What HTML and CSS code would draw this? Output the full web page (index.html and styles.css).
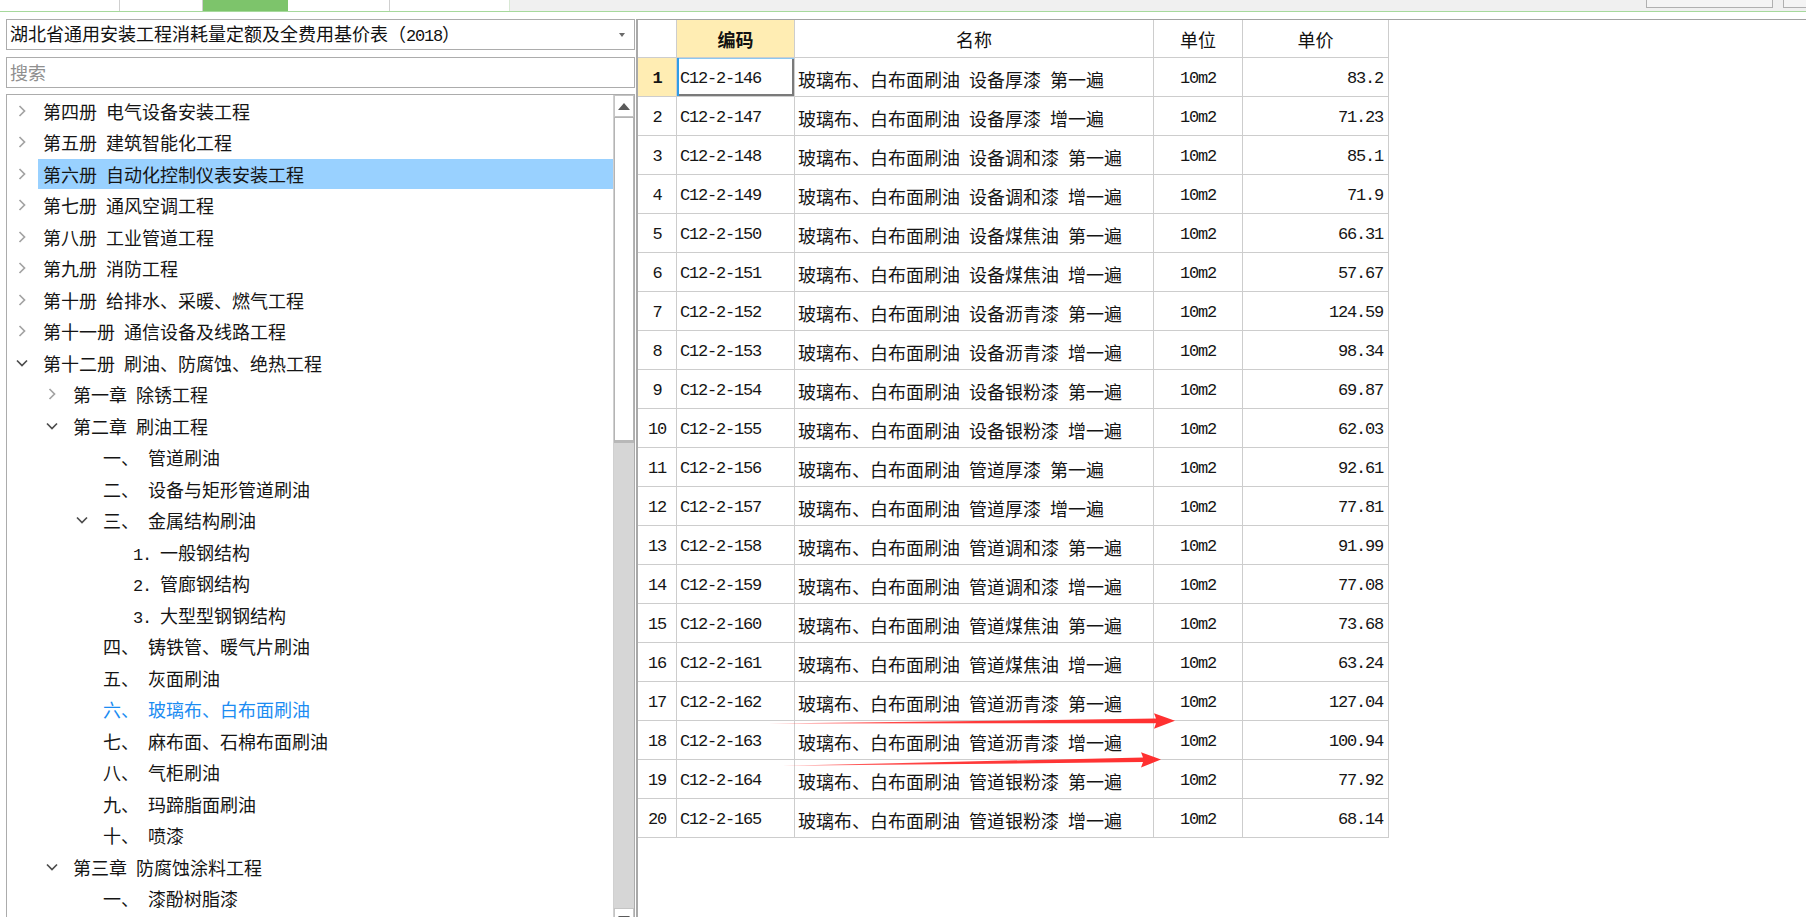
FILE: index.html
```html
<!DOCTYPE html>
<html lang="zh-CN">
<head>
<meta charset="utf-8">
<title>定额库</title>
<link rel="stylesheet" href="styles.css">
</head>
<body>
<div class="topbar">
  <div class="tab t1"></div>
  <div class="tab t2"></div>
  <div class="tab t3 active"></div>
  <div class="tab t4"></div>
  <div class="tab t5"></div>
  <div class="top-right">
    <div class="tbtn tbtn-a"></div>
    <div class="tbtn tbtn-b"></div>
  </div>
</div>

<div class="main">
  <div class="left">
    <div class="combo">
      <span class="combo-text">湖北省通用安装工程消耗量定额及全费用基价表（<span class="hw">2018</span>）</span>
      <span class="combo-arrow"></span>
    </div>
    <div class="search"><span class="placeholder">搜索</span></div>
    <div class="tree">
      <div class="tree-list">
        <div class="node l1"><span class="chev"><svg width="8" height="12" viewBox="0 0 8 12"><polyline points="1.5,1 6.5,6 1.5,11" class="ch-c"/></svg></span><span class="label">第四册 电气设备安装工程</span></div>
        <div class="node l1"><span class="chev"><svg width="8" height="12" viewBox="0 0 8 12"><polyline points="1.5,1 6.5,6 1.5,11" class="ch-c"/></svg></span><span class="label">第五册 建筑智能化工程</span></div>
        <div class="node l1"><span class="chev"><svg width="8" height="12" viewBox="0 0 8 12"><polyline points="1.5,1 6.5,6 1.5,11" class="ch-c"/></svg></span><span class="label selected">第六册 自动化控制仪表安装工程</span></div>
        <div class="node l1"><span class="chev"><svg width="8" height="12" viewBox="0 0 8 12"><polyline points="1.5,1 6.5,6 1.5,11" class="ch-c"/></svg></span><span class="label">第七册 通风空调工程</span></div>
        <div class="node l1"><span class="chev"><svg width="8" height="12" viewBox="0 0 8 12"><polyline points="1.5,1 6.5,6 1.5,11" class="ch-c"/></svg></span><span class="label">第八册 工业管道工程</span></div>
        <div class="node l1"><span class="chev"><svg width="8" height="12" viewBox="0 0 8 12"><polyline points="1.5,1 6.5,6 1.5,11" class="ch-c"/></svg></span><span class="label">第九册 消防工程</span></div>
        <div class="node l1"><span class="chev"><svg width="8" height="12" viewBox="0 0 8 12"><polyline points="1.5,1 6.5,6 1.5,11" class="ch-c"/></svg></span><span class="label">第十册 给排水、采暖、燃气工程</span></div>
        <div class="node l1"><span class="chev"><svg width="8" height="12" viewBox="0 0 8 12"><polyline points="1.5,1 6.5,6 1.5,11" class="ch-c"/></svg></span><span class="label">第十一册 通信设备及线路工程</span></div>
        <div class="node l1"><span class="chev"><svg width="12" height="8" viewBox="0 0 12 8"><polyline points="1,1.5 6,6.5 11,1.5" class="ch-e"/></svg></span><span class="label">第十二册 刷油、防腐蚀、绝热工程</span></div>
        <div class="node l2"><span class="chev"><svg width="8" height="12" viewBox="0 0 8 12"><polyline points="1.5,1 6.5,6 1.5,11" class="ch-c"/></svg></span><span class="label">第一章 除锈工程</span></div>
        <div class="node l2"><span class="chev"><svg width="12" height="8" viewBox="0 0 12 8"><polyline points="1,1.5 6,6.5 11,1.5" class="ch-e"/></svg></span><span class="label">第二章 刷油工程</span></div>
        <div class="node l3"><span class="chev"></span><span class="label">一、 管道刷油</span></div>
        <div class="node l3"><span class="chev"></span><span class="label">二、 设备与矩形管道刷油</span></div>
        <div class="node l3"><span class="chev"><svg width="12" height="8" viewBox="0 0 12 8"><polyline points="1,1.5 6,6.5 11,1.5" class="ch-e"/></svg></span><span class="label">三、 金属结构刷油</span></div>
        <div class="node l4"><span class="chev"></span><span class="label"><span class="hw">1.</span> 一般钢结构</span></div>
        <div class="node l4"><span class="chev"></span><span class="label"><span class="hw">2.</span> 管廊钢结构</span></div>
        <div class="node l4"><span class="chev"></span><span class="label"><span class="hw">3.</span> 大型型钢钢结构</span></div>
        <div class="node l3"><span class="chev"></span><span class="label">四、 铸铁管、暖气片刷油</span></div>
        <div class="node l3"><span class="chev"></span><span class="label">五、 灰面刷油</span></div>
        <div class="node l3"><span class="chev"></span><span class="label current">六、 玻璃布、白布面刷油</span></div>
        <div class="node l3"><span class="chev"></span><span class="label">七、 麻布面、石棉布面刷油</span></div>
        <div class="node l3"><span class="chev"></span><span class="label">八、 气柜刷油</span></div>
        <div class="node l3"><span class="chev"></span><span class="label">九、 玛蹄脂面刷油</span></div>
        <div class="node l3"><span class="chev"></span><span class="label">十、 喷漆</span></div>
        <div class="node l2"><span class="chev"><svg width="12" height="8" viewBox="0 0 12 8"><polyline points="1,1.5 6,6.5 11,1.5" class="ch-e"/></svg></span><span class="label">第三章 防腐蚀涂料工程</span></div>
        <div class="node l3"><span class="chev"></span><span class="label">一、 漆酚树脂漆</span></div>
      </div>
      <div class="vscroll">
        <div class="sbtn"><svg width="12" height="7" viewBox="0 0 12 7"><polygon points="0,7 6,0 12,7" fill="#5a5a5a"/></svg></div>
        <div class="thumb"></div>
        <div class="track"></div>
        <div class="sbtn"><svg width="12" height="7" viewBox="0 0 12 7"><polygon points="0,0 6,7 12,0" fill="#5a5a5a"/></svg></div>
      </div>
    </div>
  </div>

  <div class="table-panel">
    <div class="grid">
      <div class="hd corner"></div>
      <div class="hd sel-col">编码</div>
      <div class="hd">名称</div>
      <div class="hd">单位</div>
      <div class="hd">单价</div>

      <div class="rh sel-row">1</div><div class="c code focus">C12-2-146</div><div class="c name">玻璃布、白布面刷油 设备厚漆 第一遍</div><div class="c unit">10m2</div><div class="c price">83.2</div>
      <div class="rh">2</div><div class="c code">C12-2-147</div><div class="c name">玻璃布、白布面刷油 设备厚漆 增一遍</div><div class="c unit">10m2</div><div class="c price">71.23</div>
      <div class="rh">3</div><div class="c code">C12-2-148</div><div class="c name">玻璃布、白布面刷油 设备调和漆 第一遍</div><div class="c unit">10m2</div><div class="c price">85.1</div>
      <div class="rh">4</div><div class="c code">C12-2-149</div><div class="c name">玻璃布、白布面刷油 设备调和漆 增一遍</div><div class="c unit">10m2</div><div class="c price">71.9</div>
      <div class="rh">5</div><div class="c code">C12-2-150</div><div class="c name">玻璃布、白布面刷油 设备煤焦油 第一遍</div><div class="c unit">10m2</div><div class="c price">66.31</div>
      <div class="rh">6</div><div class="c code">C12-2-151</div><div class="c name">玻璃布、白布面刷油 设备煤焦油 增一遍</div><div class="c unit">10m2</div><div class="c price">57.67</div>
      <div class="rh">7</div><div class="c code">C12-2-152</div><div class="c name">玻璃布、白布面刷油 设备沥青漆 第一遍</div><div class="c unit">10m2</div><div class="c price">124.59</div>
      <div class="rh">8</div><div class="c code">C12-2-153</div><div class="c name">玻璃布、白布面刷油 设备沥青漆 增一遍</div><div class="c unit">10m2</div><div class="c price">98.34</div>
      <div class="rh">9</div><div class="c code">C12-2-154</div><div class="c name">玻璃布、白布面刷油 设备银粉漆 第一遍</div><div class="c unit">10m2</div><div class="c price">69.87</div>
      <div class="rh">10</div><div class="c code">C12-2-155</div><div class="c name">玻璃布、白布面刷油 设备银粉漆 增一遍</div><div class="c unit">10m2</div><div class="c price">62.03</div>
      <div class="rh">11</div><div class="c code">C12-2-156</div><div class="c name">玻璃布、白布面刷油 管道厚漆 第一遍</div><div class="c unit">10m2</div><div class="c price">92.61</div>
      <div class="rh">12</div><div class="c code">C12-2-157</div><div class="c name">玻璃布、白布面刷油 管道厚漆 增一遍</div><div class="c unit">10m2</div><div class="c price">77.81</div>
      <div class="rh">13</div><div class="c code">C12-2-158</div><div class="c name">玻璃布、白布面刷油 管道调和漆 第一遍</div><div class="c unit">10m2</div><div class="c price">91.99</div>
      <div class="rh">14</div><div class="c code">C12-2-159</div><div class="c name">玻璃布、白布面刷油 管道调和漆 增一遍</div><div class="c unit">10m2</div><div class="c price">77.08</div>
      <div class="rh">15</div><div class="c code">C12-2-160</div><div class="c name">玻璃布、白布面刷油 管道煤焦油 第一遍</div><div class="c unit">10m2</div><div class="c price">73.68</div>
      <div class="rh">16</div><div class="c code">C12-2-161</div><div class="c name">玻璃布、白布面刷油 管道煤焦油 增一遍</div><div class="c unit">10m2</div><div class="c price">63.24</div>
      <div class="rh">17</div><div class="c code">C12-2-162</div><div class="c name">玻璃布、白布面刷油 管道沥青漆 第一遍</div><div class="c unit">10m2</div><div class="c price">127.04</div>
      <div class="rh">18</div><div class="c code">C12-2-163</div><div class="c name">玻璃布、白布面刷油 管道沥青漆 增一遍</div><div class="c unit">10m2</div><div class="c price">100.94</div>
      <div class="rh">19</div><div class="c code">C12-2-164</div><div class="c name">玻璃布、白布面刷油 管道银粉漆 第一遍</div><div class="c unit">10m2</div><div class="c price">77.92</div>
      <div class="rh">20</div><div class="c code">C12-2-165</div><div class="c name">玻璃布、白布面刷油 管道银粉漆 增一遍</div><div class="c unit">10m2</div><div class="c price">68.14</div>
    </div>
  </div>
</div>

<svg class="annot" width="1806" height="917" viewBox="0 0 1806 917">
  <defs>
    <linearGradient id="ar" x1="0" x2="1" y1="0" y2="0">
      <stop offset="0" stop-color="#ff5050" stop-opacity="0.8"/>
      <stop offset="0.4" stop-color="#ff3c3c"/>
      <stop offset="1" stop-color="#ff3030"/>
    </linearGradient>
  </defs>
  <polygon points="768,723.6 1156,718.6 1154,713.3 1175,720.7 1154,728.8 1156,723.2" fill="url(#ar)"/>
  <polygon points="782,765.8 1143,757.5 1141,752.3 1161,759.6 1141,767.4 1143,762.1" fill="url(#ar)"/>
</svg>
</body>
</html>
```

FILE: styles.css
```css
* { box-sizing: border-box; }

html, body {
  margin: 0;
  padding: 0;
}

body {
  width: 1806px;
  height: 917px;
  overflow: hidden;
  background: #ffffff;
  font-family: "Noto Sans CJK SC", "Noto Sans", sans-serif;
  font-size: 18px;
  color: #151515;
  position: relative;
}

.hw {
  font-family: "Liberation Mono", "DejaVu Sans Mono", monospace;
  font-size: 17px;
  letter-spacing: -1.2px;
}

/* ---------- top bar ---------- */
.topbar {
  height: 12px;
  background: #f0f0f0;
  border-bottom: 1px solid #a6d99c;
  display: flex;
}

.tab {
  height: 11px;
  background: #ffffff;
  border-right: 1px solid #cfcfcf;
}
.t1 { width: 120px; }
.t2 { width: 83px; }
.t3 { width: 85px; }
.t4 { width: 102px; }
.t5 { width: 120px; border-right-color: #d8e8d4; }
.tab.active { background: #7dc46b; border-right-color: #7dc46b; }

.top-right {
  margin-left: auto;
  display: flex;
  gap: 10px;
  height: 8px;
}
.tbtn {
  height: 8px;
  border: 1px solid #b0b0b0;
  border-top: none;
  background: #f4f4f4;
}
.tbtn-a { width: 127px; }
.tbtn-b { width: 23px; border-right: none; }

/* ---------- main ---------- */
.main {
  display: flex;
  padding-top: 7px;
  height: 905px;
}

.left {
  width: 636px;
  padding-left: 6px;
  padding-right: 1px;
  display: flex;
  flex-direction: column;
}

.combo {
  height: 31px;
  flex: none;
  border: 1px solid #acacac;
  background: #fff;
  display: flex;
  align-items: center;
  padding-left: 3px;
  padding-right: 9px;
  line-height: 29px;
}
.combo-text {
  flex: 1;
  color: #111;
  white-space: nowrap;
}
.combo-arrow {
  width: 0;
  height: 0;
  border-left: 3.5px solid transparent;
  border-right: 3.5px solid transparent;
  border-top: 4px solid #6a6a6a;
  margin-top: 1px;
}

.search {
  margin-top: 7px;
  height: 31px;
  flex: none;
  border: 1px solid #acacac;
  background: #fff;
  padding-left: 3px;
  line-height: 29px;
}
.placeholder { color: #8f8f8f; }

.tree {
  margin-top: 6px;
  height: 840px;
  flex: none;
  border: 1px solid #acacac;
  display: flex;
  background: #fff;
}

.tree-list {
  flex: 1;
  word-spacing: 5px;
}

.node {
  height: 31.5px;
  line-height: 31.5px;
  display: flex;
  align-items: center;
  white-space: nowrap;
}
.node.l1 { padding-left: 6px; }
.node.l2 { padding-left: 36px; }
.node.l3 { padding-left: 66px; }
.node.l4 { padding-left: 96px; }

.chev {
  width: 30px;
  flex: none;
  display: flex;
  align-items: center;
}
.chev svg { display: block; margin-left: 5px; }
.chev svg[width="12"] { margin-left: 3px; }

.ch-c { fill: none; stroke: #a3a3a3; stroke-width: 1.7; }
.ch-e { fill: none; stroke: #4d4d4d; stroke-width: 1.7; }

.label {
  flex: 1;
  height: 30px;
  line-height: 30px;
  margin-left: -5px;
  padding-left: 5px;
}
.label.selected { background: #99d1ff; }
.label.current { color: #1c8cf2; }

.vscroll {
  width: 21px;
  flex: none;
  display: flex;
  flex-direction: column;
  background: #d6d6d6;
  border-left: 1px solid #d0d0d0;
}
.sbtn {
  height: 22px;
  flex: none;
  background: #ffffff;
  border: 1px solid #c4c4c4;
  display: flex;
  align-items: center;
  justify-content: center;
}
.thumb {
  height: 326px;
  flex: none;
  background: #ffffff;
  border: 1px solid #b4b4b4;
  border-bottom: 3px solid #b8b8b8;
}
.track {
  height: 465px;
  flex: none;
}

/* ---------- table ---------- */
.table-panel {
  flex: 1;
  border-top: 1px solid #a2a2a2;
  border-left: 2px solid #a9a9a9;
  background: #fff;
}

.grid {
  display: grid;
  grid-template-columns: 39px 118px 359px 89px 146px;
  width: 751px;
}

.hd, .rh, .c {
  border-right: 1px solid #cdcdcd;
  border-bottom: 1px solid #cdcdcd;
  white-space: nowrap;
  overflow: hidden;
}

.hd {
  height: 38px;
  padding-top: 2px;
  line-height: 35px;
  text-align: center;
  color: #111;
}
.hd.sel-col {
  background: #ffedb3;
  font-weight: 700;
}

.rh {
  height: 39px;
  padding-top: 4px;
  line-height: 34px;
  text-align: center;
  font-family: "Liberation Mono", "DejaVu Sans Mono", monospace;
  font-size: 17px;
  letter-spacing: -1.2px;
}
.rh.sel-row {
  background: #ffedb3;
  font-weight: 700;
}

.c {
  height: 39px;
  padding-top: 4px;
  line-height: 34px;
}
.c.code {
  padding-left: 3px;
  font-family: "Liberation Mono", "DejaVu Sans Mono", monospace;
  font-size: 17px;
  letter-spacing: -1.2px;
}
.c.name {
  padding-left: 3px;
  word-spacing: 5px;
}
.c.unit {
  text-align: center;
  font-family: "Liberation Mono", "DejaVu Sans Mono", monospace;
  font-size: 17px;
  letter-spacing: -1.2px;
}
.c.price {
  text-align: right;
  padding-right: 5px;
  font-family: "Liberation Mono", "DejaVu Sans Mono", monospace;
  font-size: 17px;
  letter-spacing: -1.2px;
}
.c.focus {
  box-shadow: inset 2px 0 0 #2f9de6, inset 0 1px 0 #8cc8f0, inset -2px -2px 0 #7a7a7a;
}

.annot {
  position: absolute;
  left: 0;
  top: 0;
  pointer-events: none;
}
```
